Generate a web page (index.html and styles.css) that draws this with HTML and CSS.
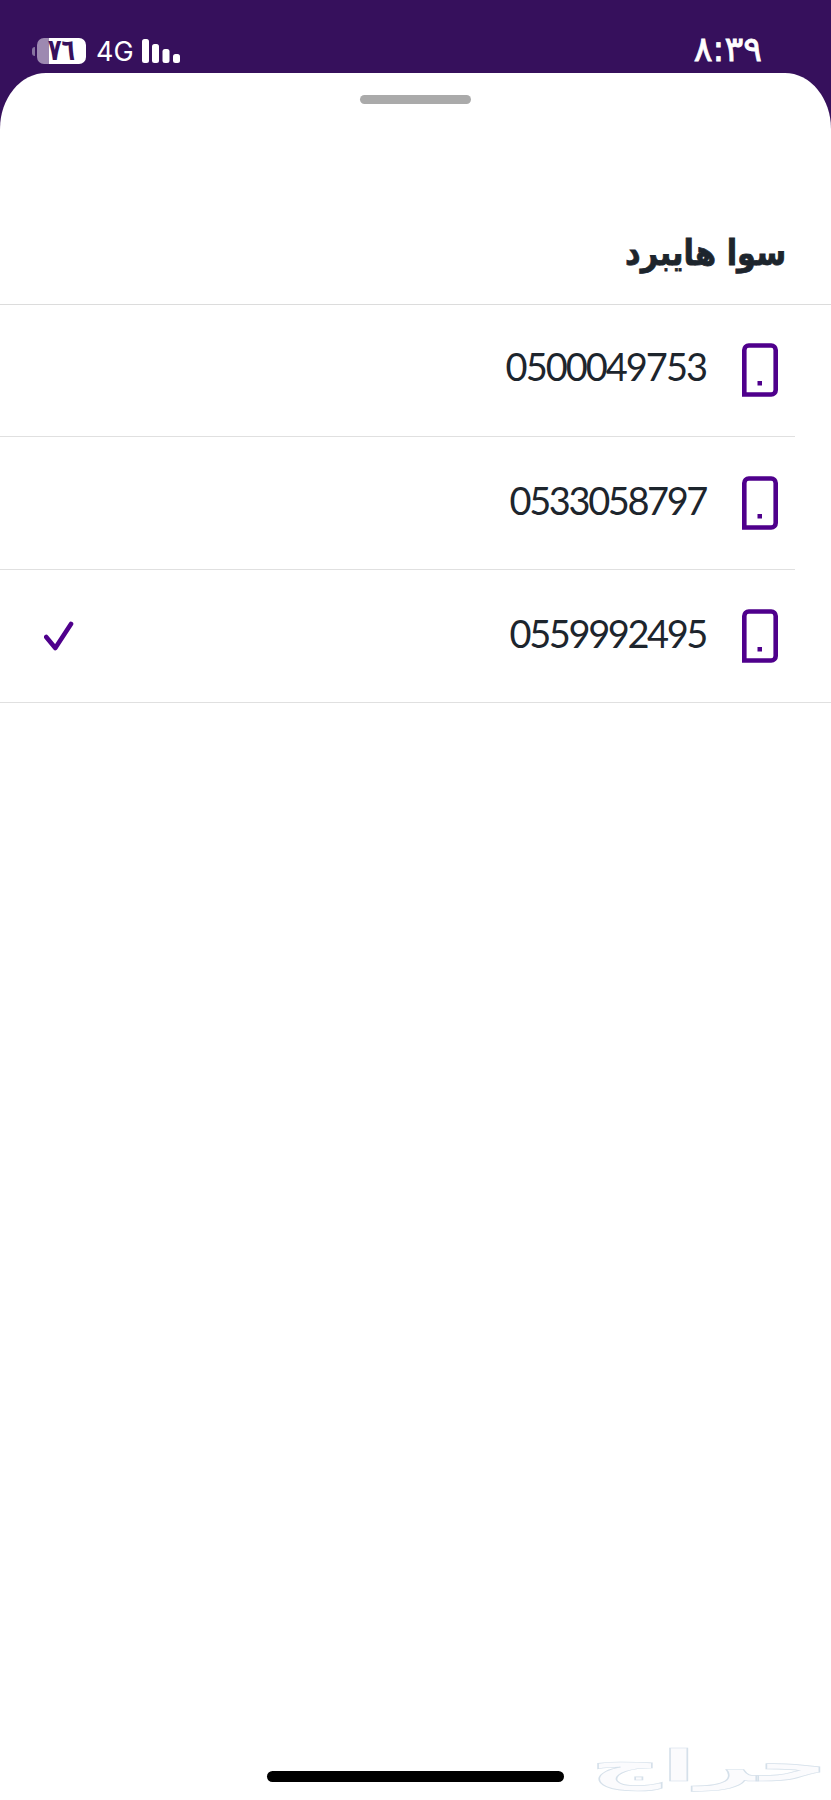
FILE: index.html
```html
<!DOCTYPE html>
<html lang="ar" dir="rtl">
<head>
<meta charset="UTF-8">
<meta name="viewport" content="width=device-width, initial-scale=1.0">
<title>سوا هايبرد</title>
<link rel="stylesheet" href="styles.css">
</head>
<body>
<header class="status-bar">
<span class="time">٨:٣٩</span>
<div class="status-icons" dir="ltr">
<div class="battery"><span>٧٦</span></div>
<span class="network">4G</span>
<svg class="signal" width="38" height="24" viewBox="0 0 38 24" fill="#fff">
<rect x="0" y="0" width="7" height="24" rx="2.5"/>
<rect x="10" y="5" width="7" height="19" rx="2.5"/>
<rect x="20.5" y="10" width="7" height="14" rx="2.5"/>
<rect x="31" y="15" width="7" height="9" rx="2.5"/>
</svg>
</div>
</header>

<main class="sheet">
<div class="handle"></div>
<h1><span>سوا هايبرد</span></h1>
<ul class="numbers">
<li>
<svg class="phone" width="36" height="54" viewBox="0 0 36 54"><path d="M2.3 51.5V7a4.5 4.5 0 0 1 4.5-4.5H29.2a4.5 4.5 0 0 1 4.5 4.5V47a4.5 4.5 0 0 1-4.5 4.5Z"/><rect x="15.5" y="38" width="4.5" height="4.5"/></svg>
<span class="number first">0500049753</span>
</li>
<li>
<svg class="phone" width="36" height="54" viewBox="0 0 36 54"><path d="M2.3 51.5V7a4.5 4.5 0 0 1 4.5-4.5H29.2a4.5 4.5 0 0 1 4.5 4.5V47a4.5 4.5 0 0 1-4.5 4.5Z"/><rect x="15.5" y="38" width="4.5" height="4.5"/></svg>
<span class="number">0533058797</span>
</li>
<li>
<svg class="phone" width="36" height="54" viewBox="0 0 36 54"><path d="M2.3 51.5V7a4.5 4.5 0 0 1 4.5-4.5H29.2a4.5 4.5 0 0 1 4.5 4.5V47a4.5 4.5 0 0 1-4.5 4.5Z"/><rect x="15.5" y="38" width="4.5" height="4.5"/></svg>
<span class="number">0559992495</span>
<svg class="check" width="30" height="30" viewBox="0 0 30 30"><path d="M2.2 16 11.300 27 27 3"/></svg>
</li>
</ul>
</main>

<div class="home-indicator"></div>
<div class="watermark"><span>حراج</span></div>
</body>
</html>
```
FILE: styles.css
```css
* {
box-sizing: border-box;
}

body {
margin: 0;
height: 1800px;
display: flex;
flex-direction: column;
position: relative;
overflow: hidden;
background: #36105c;
color: #1d252d;
font-family: Lato, "DejaVu Sans", sans-serif;
}

/* status bar */
.status-bar {
height: 73px;
padding: 27px 69px 0 37px;
display: flex;
justify-content: space-between;
color: #fff;
}
.time {
height: 45px;
font: 35px/45px "DejaVu Sans", sans-serif;
-webkit-text-stroke: 0.8px #fff;
}
.status-icons {
display: flex;
align-items: flex-start;
padding-top: 11px;
}
.battery {
position: relative;
width: 49px;
height: 26px;
border-radius: 7px;
background: linear-gradient(to right, #9d89b1 12px, #fff 12px);
color: #36105c;
font: bold 24px/24px "DejaVu Sans", sans-serif;
text-align: center;
}
.battery span {
display: block;
transform: scale(0.92, 1.25);
}
.battery::before {
content: "";
position: absolute;
left: -5px;
top: 9px;
width: 3px;
height: 9px;
border-radius: 3px 0 0 3px;
background: #8773a0;
}
.network {
width: 36px;
margin: 0 10px 0 10px;
font: 27px/27px Inter, sans-serif;
}
.signal {
margin-top: 1px;
}

/* bottom sheet */
.sheet {
flex: 1;
background: #fff;
border-radius: 46px 46px 0 0 / 56px 56px 0 0;
}
.handle {
width: 111px;
height: 9px;
margin: 22px auto 0;
border-radius: 5px;
background: #aaa;
}
h1 {
height: 201px;
margin: 0;
padding: 121px 45px 0 0;
border-bottom: 1px solid #dcdcdc;
font: bold 35px/56px "DejaVu Sans", sans-serif;
}
h1 span {
display: inline-block;
transform: scaleX(0.87);
transform-origin: right;
-webkit-text-stroke: 0.8px #1d252d;
}
.numbers {
margin: 0;
padding: 0;
list-style: none;
}
.numbers li {
display: flex;
align-items: center;
height: 132px;
margin-right: 36px;
padding: 0 17px 0 44px;
border-bottom: 1px solid #e0e0e0;
}
.numbers li + li {
height: 133px;
}
.numbers li:first-child {
padding-bottom: 2px;
}
.numbers li:last-child {
margin-right: 0;
padding-right: 53px;
}
.phone path {
fill: none;
stroke: #4f008c;
stroke-width: 4.6;
}
.phone rect {
fill: #4f008c;
}
.number {
direction: ltr;
margin: 0 36px 7px 0;
font-size: 38px;
line-height: 46px;
letter-spacing: -2.4px;
}
.number.first {
letter-spacing: -2px;
}
.check {
margin-right: auto;
fill: none;
stroke: #4f008c;
stroke-width: 4.6;
stroke-linecap: round;
stroke-linejoin: round;
}

.home-indicator {
position: absolute;
left: 267px;
bottom: 18px;
width: 297px;
height: 11px;
border-radius: 6px;
background: #000;
}

/* site mark over the corner of the sheet */
.watermark {
position: absolute;
right: 3px;
bottom: 6px;
height: 56px;
color: #fbfbfd;
font: bold 43px/56px "DejaVu Sans", sans-serif;
-webkit-text-stroke: 0.7px #d5e0ea;
}
.watermark span {
display: block;
transform: scaleX(2.3);
transform-origin: right;
}
```
